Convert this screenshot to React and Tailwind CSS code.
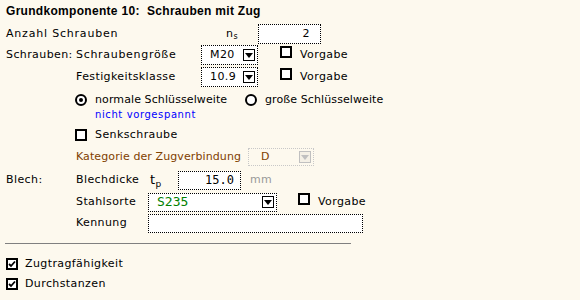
import React from 'react'

const font = { fontFamily: '"DejaVu Sans", sans-serif' }

function Box({ checked }) {
  return (
    <span className="inline-flex h-[12px] w-[12px] shrink-0 items-center justify-center border-2 border-black bg-white">
      {checked && (
        <svg width="8" height="8" viewBox="0 0 8 8">
          <path d="M1 4 L3 6 L7 1.5" fill="none" stroke="black" strokeWidth="1.8" />
        </svg>
      )}
    </span>
  )
}

function Radio({ on }) {
  return (
    <span className="inline-flex h-[12px] w-[12px] shrink-0 items-center justify-center rounded-full border-2 border-black bg-white">
      {on && <span className="h-[4px] w-[4px] rounded-full bg-black" />}
    </span>
  )
}

function Arrow({ disabled }) {
  return (
    <span
      className={
        disabled
          ? 'ml-auto mr-[2px] inline-flex h-[12px] w-[12px] items-center justify-center border border-[#c0c0c0] bg-[#f4f0e6]'
          : 'ml-auto mr-[2px] inline-flex h-[12px] w-[12px] items-center justify-center border border-black bg-white'
      }
    >
      <svg width="8" height="5" viewBox="0 0 8 5">
        <path d="M0 0 H8 L4 5 Z" fill={disabled ? '#c0c0c0' : 'black'} />
      </svg>
    </span>
  )
}

function Select({ value, className, valueClass = '', disabled }) {
  return (
    <div
      className={
        'flex shrink-0 items-center border border-dotted ' +
        (disabled ? 'border-[#c8c8c8] ' : 'border-black bg-white ') +
        className
      }
    >
      <span className={'pl-[8px] ' + valueClass}>{value}</span>
      <Arrow disabled={disabled} />
    </div>
  )
}

export default function App() {
  return (
    <div
      className="h-[300px] w-[580px] whitespace-nowrap bg-[#fdf9ee] text-[11px] tracking-[0.4px] text-black"
      style={font}
    >
      <div
        className="flex h-[22px] items-center pl-[6px] text-[12px] font-bold tracking-[0.3px]"
        style={{ fontFamily: '"Liberation Sans", sans-serif' }}
      >
        Grundkomponente 10:&nbsp;&nbsp;Schrauben mit Zug
      </div>

      <div className="mt-[2px] flex h-[20px] items-center pl-[6px]">
        <span className="w-[220px] shrink-0 tracking-[0.8px]">Anzahl Schrauben</span>
        <span className="w-[32px] shrink-0">
          n<sub className="text-[8px]">s</sub>
        </span>
        <div className="flex h-[20px] w-[63px] items-center justify-end border border-dotted border-black bg-white pr-[10px]">
          2
        </div>
      </div>

      <div className="mt-[1px] flex h-[20px] items-center pl-[6px]">
        <span className="w-[70px] shrink-0">Schrauben:</span>
        <span className="w-[125px] shrink-0 tracking-[0.7px]">Schraubengröße</span>
        <Select value="M20" className="h-[20px] w-[57px]" />
        <span className="ml-[22px]">
          <Box />
        </span>
        <span className="ml-[8px]">Vorgabe</span>
      </div>

      <div className="mt-[2px] flex h-[20px] items-center pl-[76px]">
        <span className="w-[125px] shrink-0">Festigkeitsklasse</span>
        <Select value="10.9" className="h-[20px] w-[57px]" />
        <span className="ml-[22px]">
          <Box />
        </span>
        <span className="ml-[8px]">Vorgabe</span>
      </div>

      <div className="mt-[5px] flex h-[16px] items-center pl-[75px]">
        <Radio on />
        <span className="ml-[8px] w-[150px] shrink-0 tracking-[0.1px]">normale Schlüsselweite</span>
        <Radio />
        <span className="ml-[8px] tracking-[0.1px]">große Schlüsselweite</span>
      </div>
      <div className="flex h-[12px] items-center pl-[95px] text-[10px] tracking-[0.6px] text-[#0000ff]">
        nicht vorgespannt
      </div>

      <div className="mt-[7px] flex h-[16px] items-center pl-[75px]">
        <Box />
        <span className="ml-[8px]">Senkschraube</span>
      </div>

      <div className="mt-[5px] flex h-[18px] items-center pl-[76px]">
        <span className="w-[172px] shrink-0 tracking-[0.1px] text-[#804000]">Kategorie der Zugverbindung</span>
        <Select value="D" disabled className="h-[18px] w-[66px]" valueClass="pl-[12px] text-[#804000]" />
      </div>

      <div className="mt-[4px] flex h-[20px] items-center pl-[6px]">
        <span className="w-[70px] shrink-0">Blech:</span>
        <span className="w-[74px] shrink-0">Blechdicke</span>
        <span className="w-[28px] shrink-0 text-[13px]">
          t<sub className="text-[9px]">p</sub>
        </span>
        <div
          className="flex h-[19px] w-[63px] shrink-0 items-center justify-end border border-dotted border-black bg-white pr-[6px] text-[12px] tracking-[0px]"
          style={{ fontFamily: '"DejaVu Sans Mono", monospace' }}
        >
          15.0
        </div>
        <span className="ml-[9px] text-[#999999]">mm</span>
      </div>

      <div className="mt-[2px] flex h-[20px] items-center pl-[76px]">
        <span className="w-[72px] shrink-0">Stahlsorte</span>
        <Select
          value="S235"
          className="h-[19px] w-[129px]"
          valueClass="pl-[6px] text-[13px] tracking-[0px] text-[#008000] [font-family:'DejaVu_Sans_Mono',monospace]"
        />
        <span className="ml-[21px]">
          <Box />
        </span>
        <span className="ml-[8px]">Vorgabe</span>
      </div>

      <div className="mt-[1px] flex h-[20px] items-center pl-[76px]">
        <span className="w-[72px] shrink-0">Kennung</span>
        <div className="h-[19px] w-[215px] shrink-0 border border-dotted border-black bg-white" />
      </div>

      <div className="ml-[5px] mt-[10px] h-px w-[346px] bg-[#808080]" />

      <div className="mt-[12px] flex h-[16px] items-center pl-[6px]">
        <Box checked />
        <span className="ml-[7px]">Zugtragfähigkeit</span>
      </div>
      <div className="mt-[4px] flex h-[16px] items-center pl-[6px]">
        <Box checked />
        <span className="ml-[7px]">Durchstanzen</span>
      </div>
    </div>
  )
}
